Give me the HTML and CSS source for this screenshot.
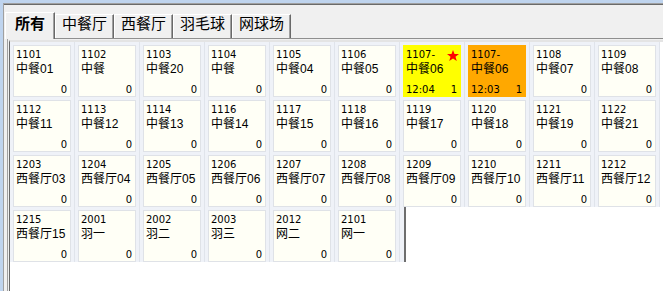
FILE: index.html
```html
<!DOCTYPE html>
<html lang="zh">
<head>
    <meta charset="UTF-8">
    <title>台位</title>
    <link rel="stylesheet" href="styles.css">
</head>
<body>
    <div class="window">
        <div class="inner">
            <!-- Вкладки -->
            <div class="tabs">
                <div class="tab active">所有</div>
                <div class="tab">中餐厅</div>
                <div class="tab">西餐厅</div>
                <div class="tab">羽毛球</div>
                <div class="tab">网球场</div>
            </div>

            <!-- Панель со столами -->
            <div class="panel">
                <div class="list">
                    <div class="grid">
                        <div class="cell"><div class="card"><span class="no">1101</span><span class="name">中餐01</span><div class="foot"><span class="count">0</span></div></div></div>
                        <div class="cell"><div class="card"><span class="no">1102</span><span class="name">中餐</span><div class="foot"><span class="count">0</span></div></div></div>
                        <div class="cell"><div class="card"><span class="no">1103</span><span class="name">中餐20</span><div class="foot"><span class="count">0</span></div></div></div>
                        <div class="cell"><div class="card"><span class="no">1104</span><span class="name">中餐</span><div class="foot"><span class="count">0</span></div></div></div>
                        <div class="cell"><div class="card"><span class="no">1105</span><span class="name">中餐04</span><div class="foot"><span class="count">0</span></div></div></div>
                        <div class="cell"><div class="card"><span class="no">1106</span><span class="name">中餐05</span><div class="foot"><span class="count">0</span></div></div></div>
                        <div class="cell"><div class="card busy">
                            <svg class="star" width="12" height="11" viewBox="0 0 24 22"><polygon points="12,0 15,8 24,8 17,13.5 19.5,22 12,17 4.5,22 7,13.5 0,8 9,8" fill="#ff0000"/></svg>
                            <span class="no">1107-</span><span class="name">中餐06</span><div class="foot"><span class="time">12:04</span><span class="count">1</span></div></div></div>
                        <div class="cell"><div class="card ordered"><span class="no">1107-</span><span class="name">中餐06</span><div class="foot"><span class="time">12:03</span><span class="count">1</span></div></div></div>
                        <div class="cell"><div class="card"><span class="no">1108</span><span class="name">中餐07</span><div class="foot"><span class="count">0</span></div></div></div>
                        <div class="cell"><div class="card"><span class="no">1109</span><span class="name">中餐08</span><div class="foot"><span class="count">0</span></div></div></div>

                        <div class="cell"><div class="card"><span class="no">1112</span><span class="name">中餐11</span><div class="foot"><span class="count">0</span></div></div></div>
                        <div class="cell"><div class="card"><span class="no">1113</span><span class="name">中餐12</span><div class="foot"><span class="count">0</span></div></div></div>
                        <div class="cell"><div class="card"><span class="no">1114</span><span class="name">中餐13</span><div class="foot"><span class="count">0</span></div></div></div>
                        <div class="cell"><div class="card"><span class="no">1116</span><span class="name">中餐14</span><div class="foot"><span class="count">0</span></div></div></div>
                        <div class="cell"><div class="card"><span class="no">1117</span><span class="name">中餐15</span><div class="foot"><span class="count">0</span></div></div></div>
                        <div class="cell"><div class="card"><span class="no">1118</span><span class="name">中餐16</span><div class="foot"><span class="count">0</span></div></div></div>
                        <div class="cell"><div class="card"><span class="no">1119</span><span class="name">中餐17</span><div class="foot"><span class="count">0</span></div></div></div>
                        <div class="cell"><div class="card"><span class="no">1120</span><span class="name">中餐18</span><div class="foot"><span class="count">0</span></div></div></div>
                        <div class="cell"><div class="card"><span class="no">1121</span><span class="name">中餐19</span><div class="foot"><span class="count">0</span></div></div></div>
                        <div class="cell"><div class="card"><span class="no">1122</span><span class="name">中餐21</span><div class="foot"><span class="count">0</span></div></div></div>

                        <div class="cell"><div class="card"><span class="no">1203</span><span class="name">西餐厅03</span><div class="foot"><span class="count">0</span></div></div></div>
                        <div class="cell"><div class="card"><span class="no">1204</span><span class="name">西餐厅04</span><div class="foot"><span class="count">0</span></div></div></div>
                        <div class="cell"><div class="card"><span class="no">1205</span><span class="name">西餐厅05</span><div class="foot"><span class="count">0</span></div></div></div>
                        <div class="cell"><div class="card"><span class="no">1206</span><span class="name">西餐厅06</span><div class="foot"><span class="count">0</span></div></div></div>
                        <div class="cell"><div class="card"><span class="no">1207</span><span class="name">西餐厅07</span><div class="foot"><span class="count">0</span></div></div></div>
                        <div class="cell"><div class="card"><span class="no">1208</span><span class="name">西餐厅08</span><div class="foot"><span class="count">0</span></div></div></div>
                        <div class="cell"><div class="card"><span class="no">1209</span><span class="name">西餐厅09</span><div class="foot"><span class="count">0</span></div></div></div>
                        <div class="cell"><div class="card"><span class="no">1210</span><span class="name">西餐厅10</span><div class="foot"><span class="count">0</span></div></div></div>
                        <div class="cell"><div class="card"><span class="no">1211</span><span class="name">西餐厅11</span><div class="foot"><span class="count">0</span></div></div></div>
                        <div class="cell"><div class="card"><span class="no">1212</span><span class="name">西餐厅12</span><div class="foot"><span class="count">0</span></div></div></div>

                        <div class="cell"><div class="card"><span class="no">1215</span><span class="name">西餐厅15</span><div class="foot"><span class="count">0</span></div></div></div>
                        <div class="cell"><div class="card"><span class="no">2001</span><span class="name">羽一</span><div class="foot"><span class="count">0</span></div></div></div>
                        <div class="cell"><div class="card"><span class="no">2002</span><span class="name">羽二</span><div class="foot"><span class="count">0</span></div></div></div>
                        <div class="cell"><div class="card"><span class="no">2003</span><span class="name">羽三</span><div class="foot"><span class="count">0</span></div></div></div>
                        <div class="cell"><div class="card"><span class="no">2012</span><span class="name">网二</span><div class="foot"><span class="count">0</span></div></div></div>
                        <div class="cell"><div class="card"><span class="no">2101</span><span class="name">网一</span><div class="foot"><span class="count">0</span></div></div></div>
                    </div>
                </div>
            </div>
        </div>
    </div>
</body>
</html>
```

FILE: styles.css
```css
/* Основа */
* {
    box-sizing: border-box;
}

body {
    margin: 0;
    height: 291px;
    overflow: hidden;
    background-color: #f0f0f0;
    font-family: "DejaVu Sans", sans-serif;
    color: #000000;
}

/* Рамка окна */
.window {
    height: 100%;
    border-top: 3px solid #bfd4ee;
    border-left: 3px solid #bfd4ee;
}

.inner {
    height: 100%;
    display: flex;
    flex-direction: column;
    border-top: 1px solid #a0a0a0;
    border-left: 1px solid #a0a0a0;
    box-shadow: inset 0 1px 0 #6a6a6a;
}

/* Вкладки */
.tabs {
    display: flex;
    align-items: flex-end;
    height: 34px;
    padding-left: 1px;
}

.tab {
    height: 24px;
    padding: 0 6px;
    border-top: 1px solid #ffffff;
    border-left: 1px solid #ffffff;
    border-right: 1px solid #696969;
    box-shadow: inset -1px 0 0 #a0a0a0;
    font-family: "Noto Sans CJK SC", sans-serif;
    font-size: 15px;
    line-height: 15px;
    white-space: nowrap;
}

.tab.active {
    position: relative;
    z-index: 1;
    height: 27px;
    margin-bottom: -1px;
    padding: 2px 9px 0;
    font-weight: bold;
    background-color: #f0f0f0;
}

/* Панель */
.panel {
    flex: 1;
    display: flex;
    margin-left: 3px;
    border-top: 1px solid #8f8f8f;
    border-left: 1px solid #a0a0a0;
    padding: 1px 0 0 1px;
}

.list {
    flex: 1;
    background-color: #ffffff;
    border-top: 2px solid #e4e4e4;
    border-left: 1px solid #696969;
}

/* Сетка столов */
.grid {
    display: flex;
    flex-wrap: wrap;
    width: 650px;
}

.cell {
    width: 65px;
    height: 55px;
    padding: 3px 0 0 3px;
    background-color: #eff2f8;
    border-right: 1px solid #e0e4eb;
}

.cell:last-child {
    box-shadow: 4px 0 0 #eff2f8, 6px 0 0 #6e6e6e;
}

.card {
    position: relative;
    width: 58px;
    height: 52px;
    display: flex;
    flex-direction: column;
    padding: 3px 3px 0 2px;
    border: 1px solid #dfe2e7;
    background-color: #fffff6;
}

.card.busy {
    background-color: #ffff00;
    border-color: #ffff00;
}

.card.ordered {
    background-color: #ffa800;
    border-color: #ffa800;
}

.star {
    position: absolute;
    top: 4px;
    right: 1px;
}

.no {
    font-size: 10px;
    line-height: 12px;
}

.name {
    margin-top: 1px;
    font-family: "Liberation Sans", "Noto Sans CJK SC", sans-serif;
    font-size: 12px;
    line-height: 14px;
    white-space: nowrap;
}

.foot {
    margin-top: auto;
    display: flex;
    font-size: 10px;
    line-height: 12px;
}

.count {
    margin-left: auto;
}
```
